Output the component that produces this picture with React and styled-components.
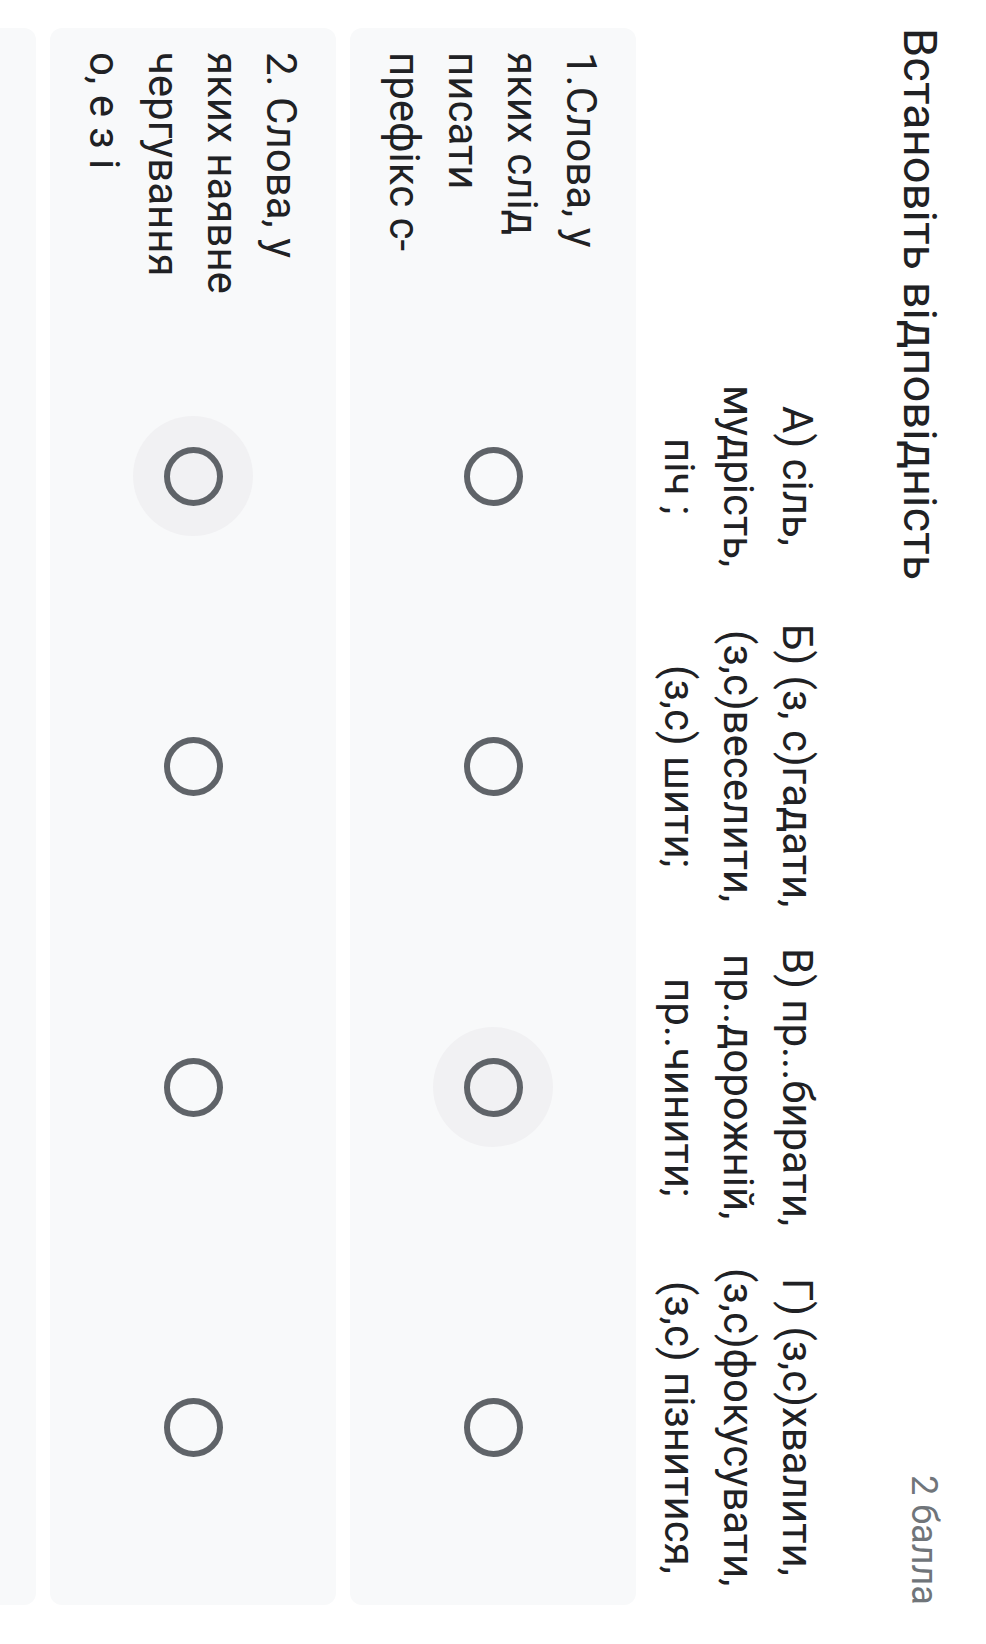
import React from "react";
import styled, { createGlobalStyle } from "styled-components";

const COLUMNS = ["А) сіль, мудрість, піч ;", "Б) (з, с)гадати, (з,с)веселити, (з,с) шити;", "В) пр...бирати, пр..дорожній, пр..чинити;", "Г) (з,с)хвалити, (з,с)фокусувати, (з,с) пізнитися,"];

const ROWS = [
  { label: "1.Слова, у яких слід писати префікс с-", hover: 2 },
  { label: "2. Слова, у яких наявне чергування о, е з і", hover: 0 },
  // third row only peeks in at the edge of the screen
  { label: "", hover: -1 },
];

const GRID = "293px 262px 318px 324px 356px";

const GlobalStyle = createGlobalStyle`
  html, body {
    margin: 0;
    padding: 0;
    background: #fff;
    overflow: hidden;
  }
  body {
    font-family: Roboto, "Noto Sans", "Liberation Sans", sans-serif;
    color: #202124;
  }
`;

// the screenshot is taken sideways, so the whole form flows top-to-bottom
const Page = styled.main`
  writing-mode: vertical-rl;
  width: 986px;
  height: 1644px;
  box-sizing: border-box;
  padding-block-start: 31px;
  padding-inline: 28px 39px;
  overflow: hidden;
`;

const Header = styled.header`
  display: flex;
  justify-content: space-between;
  align-items: flex-start;
`;

const Title = styled.h2`
  margin: 0;
  font-size: 47px;
  line-height: 69px;
  font-weight: 400;
  color: #202124;
`;

const Points = styled.span`
  font-size: 36px;
  line-height: 62px;
  color: #70757a;
`;

const ColumnHeads = styled.div`
  display: grid;
  grid-template-columns: ${GRID};
  padding-inline-start: 24px;
  margin-block: 59px 14px;
`;

const HeadCell = styled.div`
  text-align: center;
  font-size: 42px;
  line-height: 59px;
  padding-inline: 8px;
`;

const Row = styled.div`
  display: grid;
  grid-template-columns: ${GRID};
  align-items: center;
  background: #f8f9fa;
  border-radius: 12px;
  padding-block: 25px;
  padding-inline-start: 24px;
  margin-block-end: 14px;
  min-block-size: 236px;
`;

const RowLabel = styled.div`
  font-size: 42px;
  line-height: 59px;
  padding-inline-end: 36px;
`;

const RadioCell = styled.div`
  display: flex;
  justify-content: center;
  align-items: center;
`;

const RadioTarget = styled.div`
  width: 120px;
  height: 120px;
  border-radius: 50%;
  display: flex;
  align-items: center;
  justify-content: center;
  background: ${(p) => (p.$hover ? "#f1f1f3" : "transparent")};
`;

const Radio = styled.div`
  width: 59px;
  height: 59px;
  box-sizing: border-box;
  border: 6px solid #5f6368;
  border-radius: 50%;
`;

const App = () => {
  return (
    <>
      <GlobalStyle />
      <Page>
        <Header>
          <Title>Встановіть відповідність</Title>
          <Points>2 балла</Points>
        </Header>
        <ColumnHeads>
          <div />
          {COLUMNS.map((col) => (
            <HeadCell key={col}>{col}</HeadCell>
          ))}
        </ColumnHeads>
        {ROWS.map((row, i) => (
          <Row key={i}>
            <RowLabel>{row.label}</RowLabel>
            {COLUMNS.map((col, j) => (
              <RadioCell key={col}>
                <RadioTarget $hover={row.hover === j}>
                  <Radio />
                </RadioTarget>
              </RadioCell>
            ))}
          </Row>
        ))}
      </Page>
    </>
  );
};

export default App;
